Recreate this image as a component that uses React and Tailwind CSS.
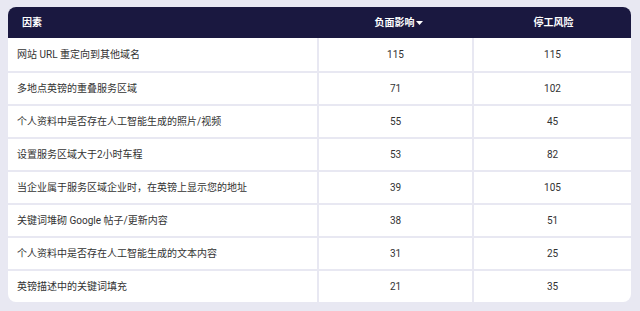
const rows = [
  ["网站 URL 重定向到其他域名", 115, 115],
  ["多地点英镑的重叠服务区域", 71, 102],
  ["个人资料中是否存在人工智能生成的照片/视频", 55, 45],
  ["设置服务区域大于2小时车程", 53, 82],
  ["当企业属于服务区域企业时，在英镑上显示您的地址", 39, 105],
  ["关键词堆砌 Google 帖子/更新内容", 38, 51],
  ["个人资料中是否存在人工智能生成的文本内容", 31, 25],
  ["英镑描述中的关键词填充", 21, 35],
];

export default function App() {
  return (
    <div
      className="w-[640px] h-[311px] bg-[#e8e8f2] pt-[7px] pl-[8px] pr-[9px]"
      style={{ fontFamily: 'Roboto, "Noto Sans CJK SC", sans-serif' }}
    >
      <div className="rounded-[8px] overflow-hidden bg-white">
        {/* Header */}
        <div className="flex h-[31px] bg-[#1a1840] text-white text-[10px] font-bold">
          <div className="w-[313px] flex items-center pl-[14px]">因素</div>
          <div className="w-[155px] flex items-center justify-center">
            负面影响
            <svg width="7" height="4" viewBox="0 0 7 4" className="ml-[1px]">
              <path d="M0 0h7L3.5 4z" fill="white" />
            </svg>
          </div>
          <div className="flex-1 flex items-center justify-center">停工风险</div>
        </div>

        {/* Body */}
        {rows.map(([name, impact, risk], i) => (
          <div
            key={i}
            className={`flex text-[10px] text-[#333] ${
              i === 0 ? "h-[33px]" : "h-[33px] border-t-2 border-[#e8e8f2]"
            }`}
          >
            <div className="w-[311px] flex items-center pl-[9px] border-r-2 border-[#e8e8f2]">
              {name}
            </div>
            <div className="w-[155px] flex items-center justify-center border-r-2 border-[#e8e8f2]">
              {impact}
            </div>
            <div className="flex-1 flex items-center justify-center">{risk}</div>
          </div>
        ))}
      </div>
    </div>
  );
}
